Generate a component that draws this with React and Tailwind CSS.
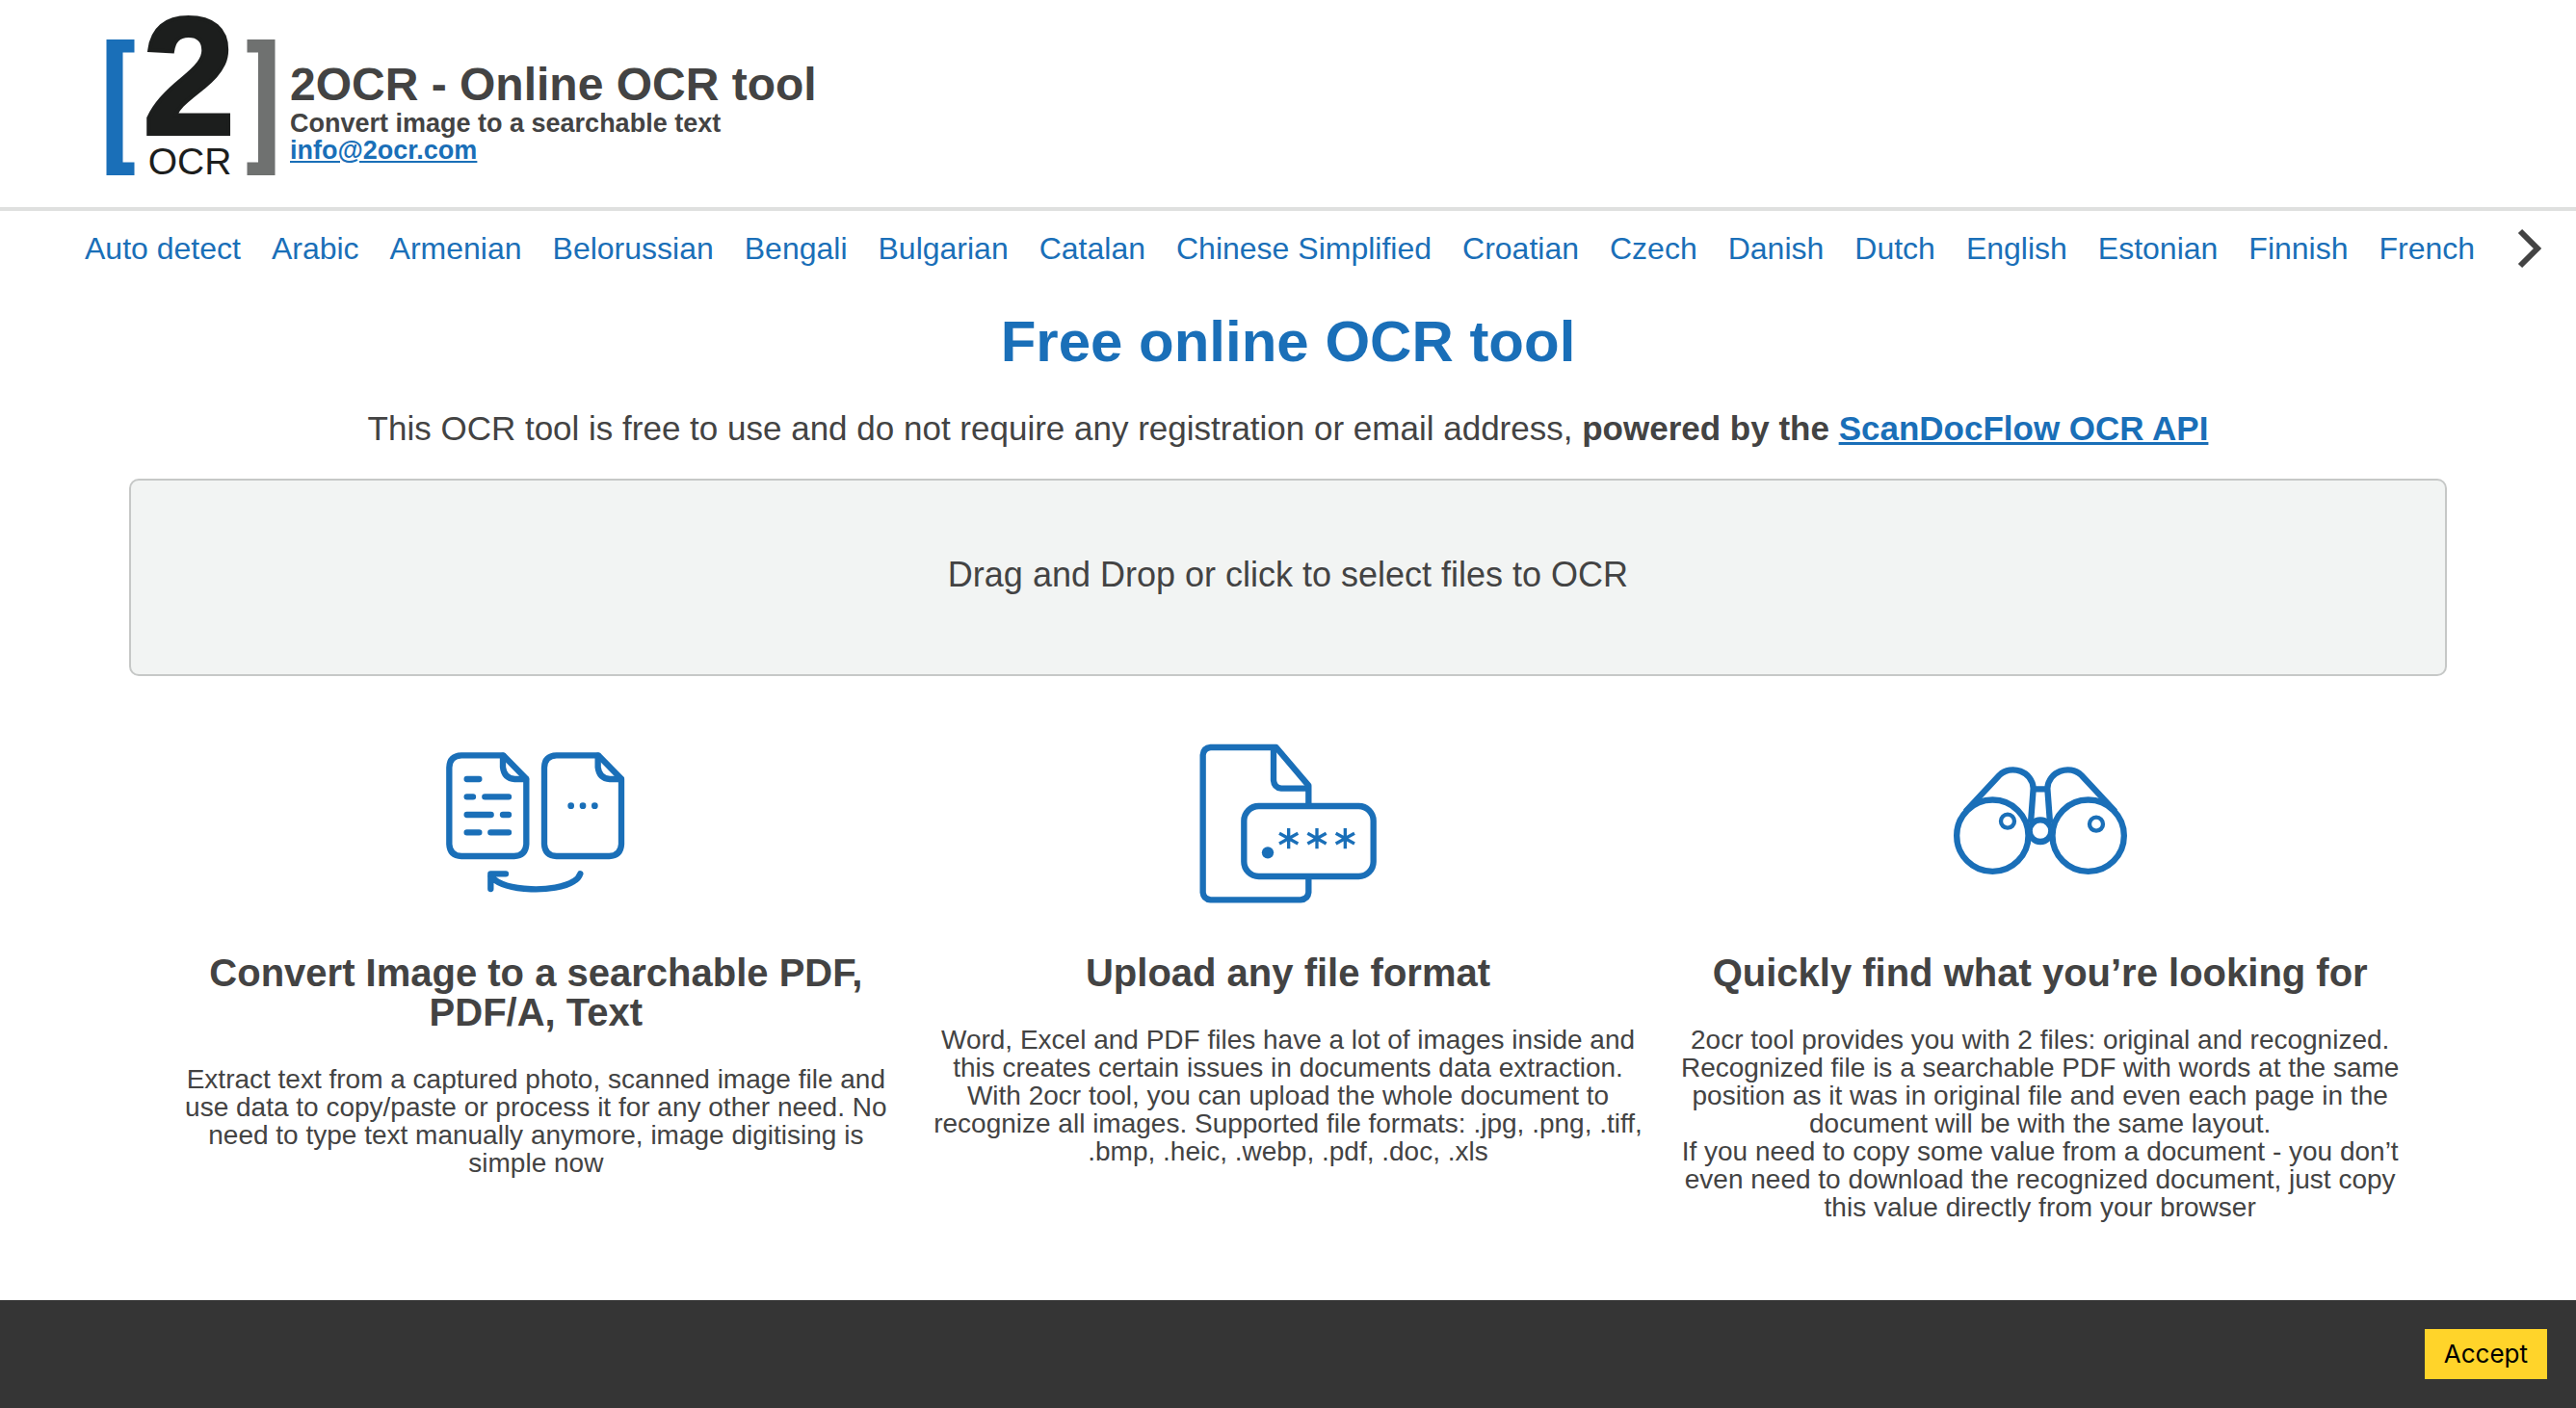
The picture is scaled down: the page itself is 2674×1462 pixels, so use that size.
const languages = ["Auto detect", "Arabic", "Armenian", "Belorussian", "Bengali", "Bulgarian", "Catalan", "Chinese Simplified", "Croatian", "Czech", "Danish", "Dutch", "English", "Estonian", "Finnish", "French"];

function Logo() {
  return (
    <svg className="h-[174px] w-[176px] shrink-0 overflow-visible" viewBox="110 12 176 174" aria-label="2OCR">
      <path fill="#1a6fb8" d="M110.500 41H139.500V54.500H127.500V168.500H139.500V182H110.500Z" />
      <path fill="#6f7170" d="M285.500 41H256.500V54.500H268V168.500H256.500V182H285.500Z" />
      <text x="196" y="139" textAnchor="middle" fontSize="172" fontWeight="700" fill="#1c1e1d" stroke="#1c1e1d" strokeWidth="4" className="font-['Liberation_Sans',sans-serif]">2</text>
      <text x="197" y="181" textAnchor="middle" fontSize="39" fill="#1c1e1d" className="font-['Liberation_Sans',sans-serif]">OCR</text>
    </svg>
  );
}

function ConvertIcon() {
  return (
    <svg className="h-[200px] w-[230px]" viewBox="3 -28 690 600" fill="none" stroke="#1a6fb8" strokeWidth="19" strokeLinecap="round" strokeLinejoin="round" aria-hidden="true">
      {[0, 296].map((x) => (
        <g key={x} transform={`translate(${x} 0)`}>
          <path d="M247 75H117Q80 76 79 113V352Q81 388 117 389H281Q317 388 319 352V148Z" />
          <path d="M246 76V112Q250 147 283 149H318" />
        </g>
      ))}
      <path d="M134 149H172M134 204H153M190 204H264M134 260H209M246 260H264M134 315H172M208 315H264" />
      <path strokeWidth="20" d="M458 232h.1M495 232h.1M532 232h.1" />
      <path d="M255 444H208V491M208 452C255 502 410 503 467 467Q482 459 487 444" />
    </svg>
  );
}

function FormatIcon() {
  return (
    <svg className="h-[200px] w-[230px]" viewBox="6 2 690 600" fill="none" stroke="#1a6fb8" strokeWidth="19" strokeLinejoin="round" aria-hidden="true">
      <path d="M415 262V199L314 80H110Q88 82 86 104V532Q88 553 110 555H390Q413 553 415 532V482" />
      <path d="M306 80V183Q308 206 330 208H415" />
      <rect x="214" y="263" width="403" height="219" rx="46" />
      <circle cx="288" cy="408" r="18.500" fill="#1a6fb8" stroke="none" />
      {[353, 441, 529].map((x) => (
        <path key={x} strokeWidth="10" strokeLinejoin="miter" transform={`translate(${x} 364)`} d="M0-32V32M-29-16L29 16M-29 16L29-16" />
      ))}
    </svg>
  );
}

function BinocularsIcon() {
  return (
    <svg className="h-[200px] w-[230px]" viewBox="9 -58 690 600" fill="none" stroke="#1a6fb8" strokeWidth="19" aria-hidden="true">
      <circle cx="205" cy="295" r="111.500" />
      <circle cx="503" cy="295" r="111.500" />
      <path d="M121 220L226 107C264 72 329 95 332 148L324 255M587 220L482 107C444 72 379 95 376 148L384 255M330 150H378" />
      <circle cx="354" cy="280" r="34" />
      <circle cx="252" cy="250" r="21" strokeWidth="13" />
      <circle cx="528" cy="259" r="21" strokeWidth="13" />
    </svg>
  );
}

const features = [
  { icon: <ConvertIcon />, title: "Convert Image to a searchable PDF, PDF/A, Text", text: ["Extract text from a captured photo, scanned image file and use data to copy/paste or process it for any other need. No need to type text manually anymore, image digitising is simple now"] },
  { icon: <FormatIcon />, title: "Upload any file format", text: ["Word, Excel and PDF files have a lot of images inside and this creates certain issues in documents data extraction. With 2ocr tool, you can upload the whole document to recognize all images. Supported file formats: .jpg, .png, .tiff, .bmp, .heic, .webp, .pdf, .doc, .xls"] },
  { icon: <BinocularsIcon />, title: "Quickly find what you’re looking for", text: ["2ocr tool provides you with 2 files: original and recognized. Recognized file is a searchable PDF with words at the same position as it was in original file and even each page in the document will be with the same layout.", "If you need to copy some value from a document - you don’t even need to download the recognized document, just copy this value directly from your browser"] },
];

export default function App() {
  return (
    <div className="flex min-h-screen flex-col bg-white font-['Liberation_Sans',Arial,sans-serif] text-[#434343]">
      <header className="flex items-start gap-[15px] border-b-4 border-[#dfe0df] px-[110px] pt-3 pb-[29px]">
        <Logo />
        <div className="pt-[50px] font-bold">
          <h1 className="text-[48px] leading-[52px]">2OCR - Online OCR tool</h1>
          <p className="text-[27px] leading-7">Convert image to a searchable text</p>
          <a href="mailto:info@2ocr.com" className="block text-[27px] leading-7 text-[#1a6fb8] underline">info@2ocr.com</a>
        </div>
      </header>

      <nav aria-label="Languages" className="flex items-center justify-between pt-4 pr-8 pl-[88px]">
        <ul className="flex gap-8 text-[32px] leading-[46px] whitespace-nowrap text-[#1a6fb8]">
          {languages.map((name) => (
            <li key={name}><a href="#">{name}</a></li>
          ))}
        </ul>
        <button type="button" aria-label="More languages">
          <svg className="h-[46px] w-8" viewBox="0 0 32 46" fill="none" stroke="#434343" strokeWidth="6" aria-hidden="true">
            <path d="M6 5L24 23 6 41" />
          </svg>
        </button>
      </nav>

      <main className="flex flex-col items-center px-[134px] text-center">
        <h2 className="mt-10 text-[60px] leading-[68px] font-bold text-[#1a6fb8]">Free online OCR tool</h2>
        <p className="mt-9 text-[35px] leading-10">
          This OCR tool is free to use and do not require any registration or email address, <b>powered by the <a href="#" className="text-[#1a6fb8] underline">ScanDocFlow OCR API</a></b>
        </p>
        <button type="button" className="mt-8 h-[205px] w-full rounded-[10px] border-2 border-[#c6c8c7] bg-[#f2f4f3] pb-1.5 text-[36px] leading-10">
          Drag and Drop or click to select files to OCR
        </button>
        <section className="mt-12 grid w-full grid-cols-3 gap-8 px-12">
          {features.map((f) => (
            <article key={f.title} className="flex flex-col items-center">
              {f.icon}
              <h3 className="mt-10 text-[40px] leading-[41px] font-bold">{f.title}</h3>
              <div className="mt-[34px] text-[28px] leading-[29px]">
                {f.text.map((t) => <p key={t}>{t}</p>)}
              </div>
            </article>
          ))}
        </section>
      </main>

      <footer className="mt-auto flex justify-end bg-[#353535] p-[30px]">
        <button type="button" className="bg-[#ffd42a] px-5 text-[26px] leading-[52px] text-black font-[Inter,sans-serif]">Accept</button>
      </footer>
    </div>
  );
}
